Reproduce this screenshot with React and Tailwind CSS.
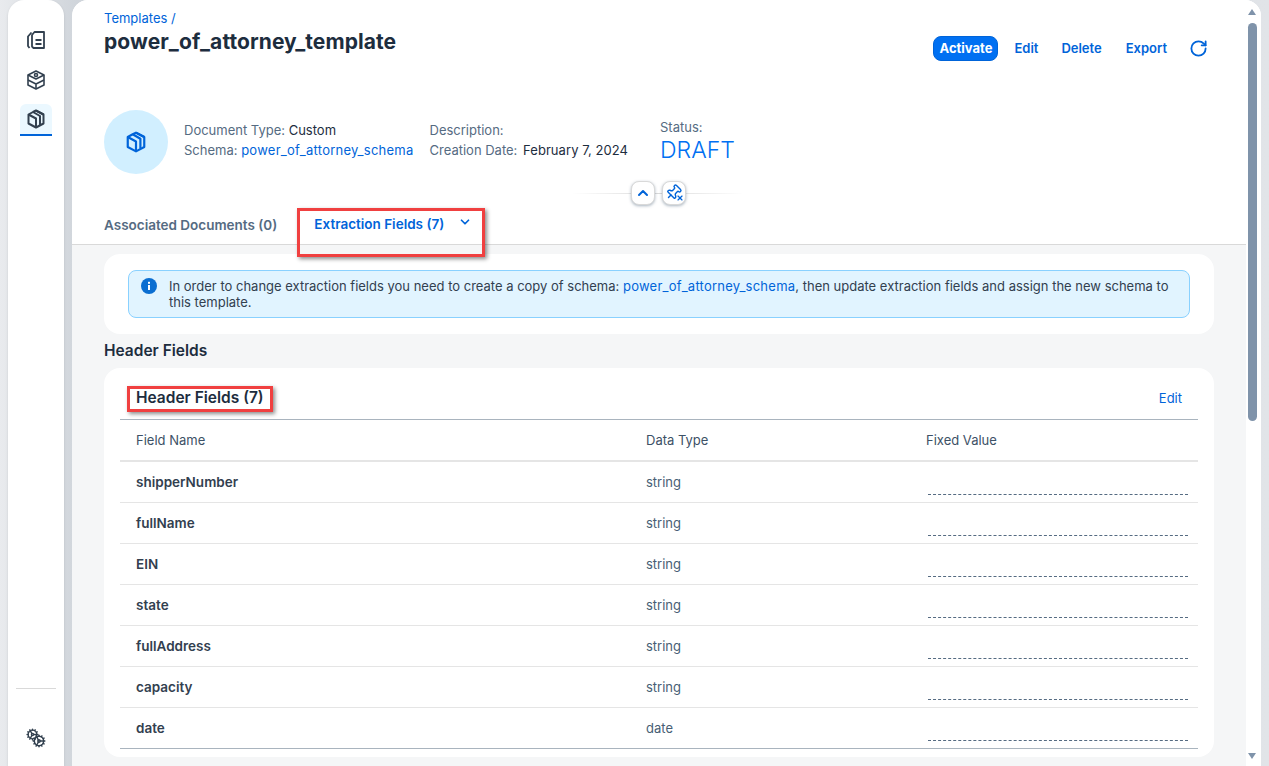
import { ChevronUp, ChevronDown, RotateCw, Pin, X, Cog } from "lucide-react";

const FIELDS = [
  ["shipperNumber", "string"],
  ["fullName", "string"],
  ["EIN", "string"],
  ["state", "string"],
  ["fullAddress", "string"],
  ["capacity", "string"],
  ["date", "date"],
];

const DocsIcon = () => (
  <svg width="20" height="20" viewBox="0 0 20 20" fill="none" stroke="#32404f" strokeWidth="1.8">
    <path d="M8.5 2h9.5v16H7.5L6 16.5V5z" strokeLinejoin="round" />
    <path d="M5.5 2.5 2 6.5v9.5L3.5 18" />
    <path d="M9.5 10h6M9.5 14h6" />
  </svg>
);

const CubeIcon = () => (
  <svg width="18" height="20" viewBox="0 0 18 20" fill="none" stroke="#32404f" strokeWidth="1.6" strokeLinejoin="round">
    <path d="M9 1 17 5v10l-8 4-8-4V5z" />
    <path d="M1 5l8 4 8-4M1 10l8 4 8-4M9 14v5" />
    <circle cx="9" cy="5" r="1.5" />
  </svg>
);

const PackageIcon = ({ color = "#32404f", size = 20 }) => (
  <svg width={size} height={size} viewBox="0 0 20 20" fill="none" stroke={color} strokeWidth="2" strokeLinejoin="round">
    <path d="M10 1.5 17.5 5.5v9L10 18.5 2.5 14.5v-9L7 3z" />
    <path d="M2.5 5.5 10 9.5v9" />
    <path d="M7 3l7 4v9M10.5 1.8l7 3.7" />
  </svg>
);

const InfoIcon = () => (
  <svg width="16" height="16" viewBox="0 0 16 16">
    <circle cx="8" cy="8" r="8" fill="#0a6ed1" />
    <rect x="7" y="7" width="2" height="5" fill="#fff" />
    <rect x="7" y="3.8" width="2" height="2" fill="#fff" />
  </svg>
);

const PinIcon = () => (
  <span className="relative block h-[18px] w-[18px]">
    <Pin size={17} strokeWidth={2} className="rotate-45 text-[#0064d9]" />
    <X size={8} strokeWidth={3.5} className="absolute right-[-1px] bottom-0 text-[#0064d9]" />
  </span>
);

const Highlight = ({ className }) => (
  <div className={`pointer-events-none absolute border-[3px] border-[#f04040] shadow-[2px_2px_4px_rgba(0,0,0,0.45)] ${className}`} />
);

export default function App() {
  return (
    <div
      className="flex h-[766px] w-[1269px] gap-2 overflow-hidden bg-gradient-to-r from-[#e9ebee] from-0% via-[#d0d5db] via-6% to-[#e1e4e8] px-2 text-[13px] text-[#1d2d3e]"
      style={{ fontFamily: 'Inter, "Noto Sans", sans-serif' }}
    >
      {/* left nav */}
      <nav className="flex h-full w-14 shrink-0 flex-col items-center rounded-t-2xl bg-white pt-6 shadow-sm">
        <button className="flex h-8 w-8 items-center justify-center">
          <DocsIcon />
        </button>
        <button className="mt-2 flex h-8 w-8 items-center justify-center">
          <CubeIcon />
        </button>
        <button className="mt-2 flex h-8 w-8 items-center justify-center rounded-t-md border-b-2 border-[#0064d9] bg-[#ebf8ff]">
          <PackageIcon />
        </button>
        <div className="mt-auto mb-[18px] flex w-10 flex-col items-center">
          <div className="h-px w-full bg-[#d9d9d9]" />
          <div className="relative mt-[39px] h-[20px] w-[20px]">
            <Cog size={13} strokeWidth={2.5} className="absolute top-0 left-0 text-[#32404f]" />
            <Cog size={14} strokeWidth={2.5} className="absolute right-0 bottom-0 text-[#32404f]" />
          </div>
        </div>
      </nav>

      {/* main */}
      <main className="relative flex h-full min-w-0 flex-1 overflow-hidden rounded-t-2xl bg-white">
        <div className="flex min-w-0 flex-1 flex-col">
          {/* object header */}
          <header className="h-[245px] shrink-0 border-b border-[#d9d9d9] bg-white pt-[10px] pr-[38px] pl-8 shadow-[0_1px_3px_rgba(0,0,0,0.1)]">
            <div className="flex justify-between">
              <div>
                <div className="text-[13px] leading-[16px] text-[#0064d9]">Templates /</div>
                <h1 className="mt-[3px] text-[21px] leading-[26px] font-bold tracking-[0.08px]">power_of_attorney_template</h1>
              </div>
              <div className="mt-[26px] flex items-center">
                <button className="h-[25px] rounded-lg border border-[#0064d9] bg-[#0070f2] px-[5px] text-[13px] font-bold text-white">Activate</button>
                <button className="ml-[16px] text-[13px] font-semibold text-[#0064d9]">Edit</button>
                <button className="ml-[23px] text-[13px] font-semibold text-[#0064d9]">Delete</button>
                <button className="ml-6 text-[13px] font-semibold text-[#0064d9]">Export</button>
                <RotateCw size={19} strokeWidth={2.3} className="ml-[22px] text-[#0064d9]" />
              </div>
            </div>

            <div className="mt-[49px] flex items-center">
              <div className="flex h-16 w-16 items-center justify-center rounded-full bg-[#d1efff]">
                <PackageIcon color="#0064d9" size={22} />
              </div>
              <div className="ml-4 -mt-1 text-[13px] leading-[20px] text-[#556b82]">
                <div>Document Type: <span className="text-[#1d2d3e]">Custom</span></div>
                <div>Schema: <span className="tracking-[0.25px] text-[#0064d9]">power_of_attorney_schema</span></div>
              </div>
              <div className="ml-4 -mt-1 text-[13px] leading-[20px] text-[#556b82]">
                <div>Description:</div>
                <div>Creation Date: <span className="ml-[2px] tracking-[0.06px] text-[#1d2d3e]">February 7, 2024</span></div>
              </div>
              <div className="ml-8 -mt-[3px] text-[#556b82]">
                <div className="text-[13px] leading-[18px]">Status:</div>
                <div className="text-[23px] leading-[28px] font-light text-[#0070f2]">DRAFT</div>
              </div>
            </div>

            <div className="relative mt-[7px] ml-[468px] flex w-[172px] items-center justify-center gap-[7px]">
              <div className="absolute inset-x-0 top-1/2 h-px bg-gradient-to-r from-transparent via-[#d9d9d9] to-transparent" />
              <button className="relative flex h-6 w-6 items-center justify-center rounded-lg border border-[#d9d9d9] bg-white shadow-[0_1px_3px_rgba(85,107,130,0.5)]">
                <ChevronUp size={16} strokeWidth={3} className="text-[#0064d9]" />
              </button>
              <button className="relative flex h-6 w-6 items-center justify-center rounded-lg border border-[#d9d9d9] bg-white shadow-[0_1px_3px_rgba(85,107,130,0.5)]">
                <PinIcon />
              </button>
            </div>

            <div className="mt-[5px] flex text-[13.5px] font-semibold">
              <div className="pt-[5px] text-[#556b82]">Associated Documents (0)</div>
              <div className="ml-[28px] flex h-[38px] w-[171px] items-start justify-between border-b-2 border-[#0064d9] pt-[4px] pr-[4px] pl-[9px] text-[#0064d9]">
                <span>Extraction Fields (7)</span>
                <ChevronDown size={14} strokeWidth={3} className="mt-[1px]" />
              </div>
            </div>
          </header>

          {/* scrolled content */}
          <div className="min-h-0 flex-1 bg-[#f5f6f7] pt-[9px] pr-8 pl-8">
            <section className="h-[80px] rounded-2xl bg-white px-6 pt-4">
              <div className="flex h-12 gap-[8px] rounded-lg border border-[#89d1ff] bg-[#e1f4ff] px-3 pt-[7px] text-[13px] leading-[16px] text-[#32404f]">
                <div className="shrink-0"><InfoIcon /></div>
                <div className="ml-[4px]">
                  <div className="whitespace-nowrap">
                    In order to change extraction fields you need to create a copy of schema:{" "}
                    <span className="tracking-[0.25px] text-[#0064d9]">power_of_attorney_schema</span>, then update extraction fields and assign the new schema to
                  </div>
                  <div>this template.</div>
                </div>
              </div>
            </section>

            <h2 className="mt-[8px] text-[15.5px] leading-[18px] font-semibold">Header Fields</h2>

            <section className="mt-[8px] h-[389px] rounded-2xl bg-white px-4 pt-[17px]">
              <div className="flex h-[35px] items-start justify-between border-b border-[#a9b4be] px-4">
                <h3 className="text-[15.5px] leading-[26px] font-semibold">Header Fields (7)</h3>
                <button className="text-[13px] leading-[26px] text-[#0064d9]">Edit</button>
              </div>
              <div className="grid h-[42px] grid-cols-[510px_280px_1fr] items-center border-b-2 border-[#e5e5e5] px-4 pt-[2px] text-[13px] text-[#3d5166]">
                <div>Field Name</div>
                <div>Data Type</div>
                <div>Fixed Value</div>
              </div>
              {FIELDS.map(([name, type], i) => (
                <div
                  key={name}
                  className={`grid h-[41px] grid-cols-[510px_280px_1fr] items-center border-b px-4 pt-[2px] ${i === FIELDS.length - 1 ? "border-[#a9b4be]" : "border-[#e5e5e5]"}`}
                >
                  <div className="-mt-[2px] text-[13.5px] font-semibold text-[#32404f]">{name}</div>
                  <div className="text-[13px] text-[#475e75]">{type}</div>
                  <div className="mb-[7px] ml-[2px] h-[15px] w-[260px] self-end border-b border-dashed border-[#556b82]" />
                </div>
              ))}
            </section>
          </div>
        </div>

        {/* scrollbar */}
        <div className="flex w-[15px] shrink-0 flex-col items-center bg-white pt-[9px] pr-[3px] pb-[7px]">
          <div className="h-0 w-0 border-x-[4px] border-b-[6px] border-x-transparent border-b-[#7f93aa]" />
          <div className="mt-[8px] h-[398px] w-[9px] rounded-full bg-[#7f93aa]" />
          <div className="mt-auto h-0 w-0 border-x-[4px] border-t-[6px] border-x-transparent border-t-[#7f93aa]" />
        </div>

        <Highlight className="top-[208px] left-[225px] h-[49px] w-[188px]" />
        <Highlight className="top-[386px] left-[55px] h-[26px] w-[146px]" />
      </main>
    </div>
  );
}
